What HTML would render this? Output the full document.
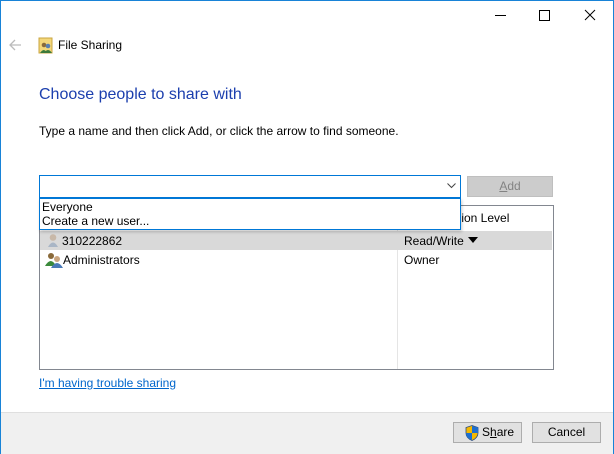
<!DOCTYPE html>
<html><head><style>
body{margin:0;width:614px;height:454px;overflow:hidden;font-family:"Liberation Sans",sans-serif;font-size:12px;color:#000;background:#fff}
.win{position:absolute;left:0;top:0;width:612px;height:452px;border:1px solid #1883d7;background:#fff}
.a{position:absolute}
</style></head><body>
<div class="win"></div>
<div class="a" style="left:495px;top:15px;width:11px;height:1px;background:#000"></div>
<div class="a" style="left:539px;top:10px;width:9px;height:9px;border:1px solid #000"></div>
<svg class="a" style="left:584px;top:9px" width="12" height="12"><path d="M1 1L11 11M11 1L1 11" stroke="#000" stroke-width="1"/></svg>
<svg class="a" style="left:8px;top:39px" width="14" height="12"><path d="M13 6H2M7 1L2 6L7 11" stroke="#bbb" stroke-width="1.3" fill="none"/></svg>
<svg class="a" style="left:38px;top:37px" width="16" height="17"><rect x="1" y="1" width="13" height="15" fill="#f4d77a" stroke="#c9a640"/><circle cx="6" cy="8" r="2.3" fill="#8a6a3a"/><circle cx="10" cy="9" r="2.3" fill="#5a7fb0"/><path d="M2 16q4-6 7 0zM6 16q4-6 8 0z" fill="#3b7a3b"/></svg>
<div class="a" style="left:58px;top:38px;font-size:12px">File Sharing</div>
<div class="a" style="left:39px;top:86px;font-size:16px;color:#1c3fae">Choose people to share with</div>
<div class="a" style="left:39px;top:124px">Type a name and then click Add, or click the arrow to find someone.</div>
<div class="a" style="left:39px;top:205px;width:513px;height:163px;border:1px solid #828790;background:#fff"></div>
<div class="a" style="left:397px;top:206px;width:1px;height:163px;background:#e5e5e5"></div>
<div class="a" style="left:418px;top:211px">Permission Level</div>
<div class="a" style="left:40px;top:231px;width:512px;height:19px;background:#d9d9d9"></div>
<svg class="a" style="left:46px;top:233px" width="14" height="15"><circle cx="7" cy="4.5" r="3.3" fill="#c8b8a8"/><path d="M2 14q5-9 10 0z" fill="#a9b6c6"/></svg>
<div class="a" style="left:62px;top:234px">310222862</div>
<div class="a" style="left:404px;top:234px">Read/Write</div>
<svg class="a" style="left:468px;top:237px" width="10" height="6"><path d="M0 0H10L5 6z" fill="#000"/></svg>
<svg class="a" style="left:45px;top:252px" width="18" height="16"><circle cx="6" cy="4" r="3" fill="#8a6a3a"/><path d="M0 14q6-10 11 0z" fill="#3b8a3b"/><circle cx="12" cy="7" r="3" fill="#caa680"/><path d="M6 16q6-10 12 0z" fill="#4a7ab8"/></svg>
<div class="a" style="left:63px;top:253px">Administrators</div>
<div class="a" style="left:404px;top:253px">Owner</div>
<div class="a" style="left:39px;top:175px;width:420px;height:21px;border:1px solid #0078d7;background:#fff"></div>
<svg class="a" style="left:447px;top:183px" width="9" height="6"><path d="M0.5 0.5L4.5 4.5L8.5 0.5" stroke="#444" fill="none"/></svg>
<div class="a" style="left:39px;top:198px;width:420px;height:30px;border:1px solid #0078d7;background:#fff;box-shadow:1px 2px 3px rgba(0,0,0,.2)"></div>
<div class="a" style="left:42px;top:200px">Everyone</div>
<div class="a" style="left:42px;top:214px">Create a new user...</div>
<div class="a" style="left:467px;top:176px;width:84px;height:19px;border:1px solid #bfbfbf;background:#cccccc;color:#838383;text-align:center;line-height:19px"><u>A</u>dd</div>
<div class="a" style="left:39px;top:376px;color:#0066cc;text-decoration:underline">I'm having trouble sharing</div>
<div class="a" style="left:1px;top:412px;width:612px;height:41px;background:#f0f0f0;border-top:1px solid #dfdfdf"></div>
<div class="a" style="left:453px;top:422px;width:67px;height:19px;border:1px solid #adadad;background:#e1e1e1;line-height:19px"><svg style="position:absolute;left:11px;top:2px" width="14" height="16"><path d="M7 0.5L13 2.5V8Q13 13 7 15.5Q1 13 1 8V2.5z" fill="#f5b800" stroke="#2b4d80" stroke-width="0.8"/><path d="M7 1V8H13V2.5zM7 8V15Q1 13 1 8z" fill="#1f6fcf"/></svg><span style="position:absolute;left:28px">S<u>h</u>are</span></div>
<div class="a" style="left:532px;top:422px;width:67px;height:19px;border:1px solid #adadad;background:#e1e1e1;text-align:center;line-height:19px">Cancel</div>
</body></html>
